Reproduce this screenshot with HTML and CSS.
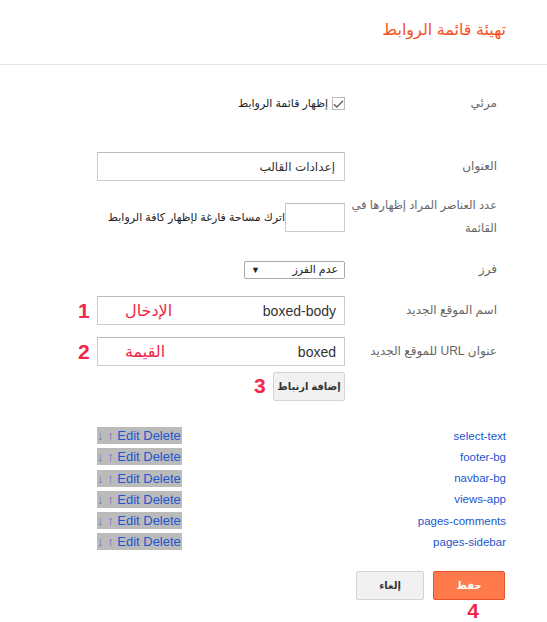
FILE: index.html
```html
<!DOCTYPE html>
<html lang="ar" dir="rtl">
<head>
    <meta charset="UTF-8">
    <meta name="viewport" content="width=device-width, initial-scale=1.0">
    <title>تهيئة قائمة الروابط</title>
    <link rel="stylesheet" href="styles.css">
</head>
<body>
    <div class="header">
        <h2>تهيئة قائمة الروابط</h2>
    </div>

    <div class="form">
        <div class="row row-visible">
            <div class="label">مرئي</div>
            <div class="field">
                <label class="check">
                    <span class="box">
                        <svg width="12" height="10" viewBox="0 0 12 10"><path d="M1 5.2 L4.2 8.3 L11 1.4" fill="none" stroke="#666" stroke-width="1.6"/></svg>
                    </span>
                    إظهار قائمة الروابط
                </label>
            </div>
        </div>

        <div class="row row-title">
            <div class="label">العنوان</div>
            <div class="field">
                <div class="input">إعدادات القالب</div>
            </div>
        </div>

        <div class="row row-count">
            <div class="label label-two">عدد العناصر المراد إظهارها في القائمة</div>
            <div class="field field-count">
                <div class="input input-small"></div>
                <span class="hint">اترك مساحة فارغة لإظهار كافة الروابط</span>
            </div>
        </div>

        <div class="row row-sort">
            <div class="label">فرز</div>
            <div class="field">
                <div class="select">
                    <span>عدم الفرز</span>
                    <span class="arrow">▼</span>
                </div>
            </div>
        </div>

        <div class="row row-name">
            <div class="label">اسم الموقع الجديد</div>
            <div class="field">
                <div class="input input-value">
                    boxed-body
                    <span class="note note-text">الإدخال</span>
                    <span class="note note-num">1</span>
                </div>
            </div>
        </div>

        <div class="row row-url">
            <div class="label">عنوان URL للموقع الجديد</div>
            <div class="field">
                <div class="input input-value">
                    boxed
                    <span class="note note-text">القيمة</span>
                    <span class="note note-num">2</span>
                </div>
            </div>
        </div>

        <div class="row row-add">
            <div class="label"></div>
            <div class="field">
                <span class="btn-wrap">
                    <button class="btn-add">إضافة ارتباط</button>
                    <span class="note note-num note-three">3</span>
                </span>
            </div>
        </div>
    </div>

    <ul class="links">
        <li><a href="#">select-text</a><span class="tools" dir="ltr"><span class="down">↓</span> <span class="up">↑</span> Edit Delete</span></li>
        <li><a href="#">footer-bg</a><span class="tools" dir="ltr"><span class="down">↓</span> <span class="up">↑</span> Edit Delete</span></li>
        <li><a href="#">navbar-bg</a><span class="tools" dir="ltr"><span class="down">↓</span> <span class="up">↑</span> Edit Delete</span></li>
        <li><a href="#">views-app</a><span class="tools" dir="ltr"><span class="down">↓</span> <span class="up">↑</span> Edit Delete</span></li>
        <li><a href="#">pages-comments</a><span class="tools" dir="ltr"><span class="down">↓</span> <span class="up">↑</span> Edit Delete</span></li>
        <li><a href="#">pages-sidebar</a><span class="tools" dir="ltr"><span class="down">↓</span> <span class="up">↑</span> Edit Delete</span></li>
    </ul>

    <div class="actions">
        <div class="save-col">
            <button class="btn-save">حفظ</button>
            <span class="step">4</span>
        </div>
        <button class="btn-cancel">إلغاء</button>
    </div>
</body>
</html>
```

FILE: styles.css
```css
body {
    font-family: Arial, "Liberation Sans", "DejaVu Sans", sans-serif;
    margin: 0;
    padding: 0;
    background-color: #fff;
    color: #666;
    font-size: 12px;
}
.header {
    height: 64px;
    border-bottom: 1px solid #e5e5e5;
    padding-right: 41px;
    display: flex;
    align-items: center;
}
h2 {
    margin: 0;
    font-size: 16px;
    font-weight: normal;
    color: #f4511e;
    margin-top: -5px;
}
.form {
    padding-right: 50px;
}
.row {
    display: grid;
    grid-template-columns: 142px 248px;
    column-gap: 10px;
    align-items: center;
}
.label {
    color: #666;
    line-height: 23px;
}
.label-two {
    width: 150px;
    margin-left: -8px;
    font-size: 11.5px;
}
.row-visible {
    margin-top: 27px;
    height: 20px;
}
.row-title {
    margin-top: 40px;
}
.row-count {
    margin-top: 13px;
    align-items: start;
}
.row-sort {
    margin-top: 18px;
}
.row-name {
    margin-top: 15px;
}
.row-url {
    margin-top: 12px;
}
.row-add {
    margin-top: 6px;
}
.check {
    display: flex;
    align-items: center;
    gap: 4px;
    color: #222;
    font-size: 11px;
}
.box {
    width: 11px;
    height: 11px;
    border: 1px solid #bbb;
    display: flex;
    align-items: center;
    justify-content: center;
}
.input {
    position: relative;
    box-sizing: border-box;
    height: 29px;
    border: 1px solid #ccc;
    border-top-color: #bbb;
    padding: 0 9px;
    display: flex;
    align-items: center;
    color: #333;
}
.field-count {
    display: flex;
    align-items: center;
    padding-top: 9px;
    white-space: nowrap;
}
.input-small {
    width: 60px;
    flex: none;
}
.hint {
    color: #222;
    font-size: 11px;
    letter-spacing: -0.2px;
}
.select {
    box-sizing: border-box;
    width: 101px;
    height: 18px;
    border: 1px solid #aaa;
    border-radius: 2px;
    display: flex;
    justify-content: space-between;
    align-items: center;
    padding: 0 6px;
    color: #222;
    font-size: 11px;
}
.arrow {
    font-size: 9px;
}
.input-value {
    font-size: 14px;
    padding-right: 8px;
}
.note {
    position: absolute;
    color: #f0284a;
}
.note-text {
    left: 27px;
    font-size: 16px;
}
.note-num {
    font-size: 21px;
    font-weight: bold;
    font-family: Arial, "Liberation Sans", sans-serif;
    line-height: 24px;
}
.input .note-num {
    left: -20px;
}
.btn-wrap {
    position: relative;
    display: inline-flex;
}
.btn-add {
    width: 72px;
    height: 29px;
    background: #f1f1f1;
    border: 1px solid #d4d4d4;
    border-radius: 2px;
    font-family: inherit;
    font-size: 10px;
    font-weight: bold;
    color: #333;
    padding: 0;
}
.note-three {
    left: -19px;
    top: 2px;
}
.links {
    list-style: none;
    margin: 26px 41px 0 97px;
    padding: 0;
}
.links li {
    display: flex;
    justify-content: space-between;
    align-items: center;
    height: 17px;
    margin-bottom: 4.3px;
}
.links a {
    color: #2255d0;
    text-decoration: none;
    font-size: 11.5px;
}
.tools {
    background: #bbb;
    color: #2255d0;
    font-size: 13px;
    line-height: 17px;
    padding-right: 1px;
}
.down {
    color: #6677aa;
}
.up {
    color: #7766cc;
}
.actions {
    display: flex;
    align-items: flex-start;
    gap: 9px;
    margin-top: 21px;
    padding-right: 42px;
}
.actions button {
    height: 29px;
    border-radius: 2px;
    font-family: inherit;
    font-size: 10px;
    font-weight: bold;
    padding: 0;
}
.save-col {
    display: flex;
    flex-direction: column;
    align-items: center;
}
.step {
    color: #f0284a;
    font-size: 21px;
    font-weight: bold;
    line-height: 22px;
    margin-left: 8px;
}
.btn-save {
    width: 72px;
    background: #ff7a4c;
    border: 1px solid #e8532a;
    color: #fff;
}
.btn-cancel {
    width: 68px;
    background: #f1f1f1;
    border: 1px solid #d4d4d4;
    color: #333;
}
```
